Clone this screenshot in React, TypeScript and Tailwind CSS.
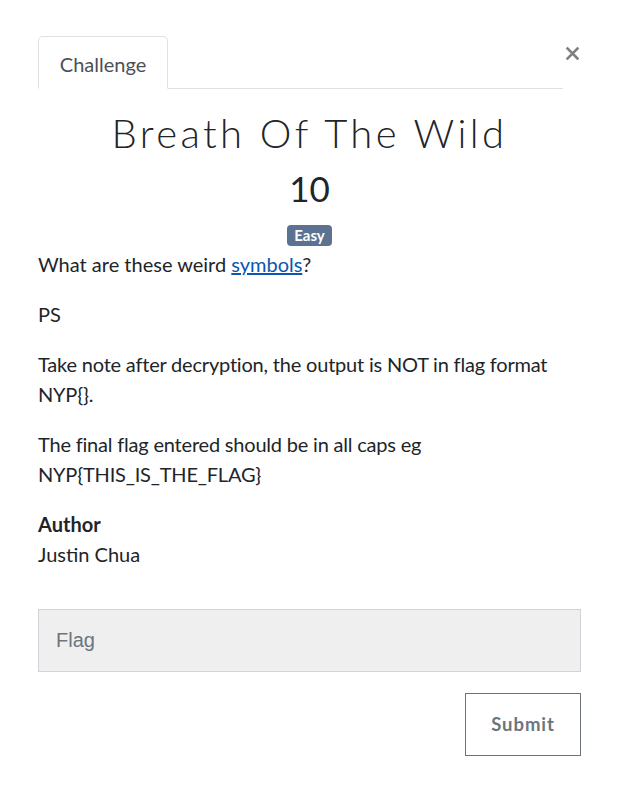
export default function App() {
  return (
    <div className="w-[620px] h-[810px] bg-white pl-[38px] pr-[39px] pt-[36px] font-['Lato','Liberation_Sans',sans-serif] text-[#212529]">
      <div className="flex items-start">
        <div className="flex flex-1 border-b border-[#dee2e6]">
          <div className="-mb-px flex h-[53px] w-[130px] items-center justify-center rounded-t-[5px] border border-[#dee2e6] border-b-white bg-white pt-[3px] text-[20px] text-[#495057]">
            Challenge
          </div>
        </div>
        <button
          type="button"
          className="flex h-[33px] w-[18px] items-center justify-start pt-[2px] pl-[3px]"
        >
          <svg width="13" height="13" viewBox="0 0 13 13">
            <path
              d="M1.5 1.5 L11.5 11.5 M11.5 1.5 L1.5 11.5"
              stroke="#808080"
              strokeWidth="2.6"
              strokeLinecap="square"
            />
          </svg>
        </button>
      </div>

      <h2 className="mt-[20px] text-center text-[40px] font-light leading-[48px] tracking-[0.085em]">
        Breath Of The Wild
      </h2>
      <h3 className="mt-[10px] text-center text-[35px] leading-[42px]">10</h3>
      <div className="mt-[16px] flex justify-center">
        <span className="rounded-[4px] bg-[#5b7290] px-[7px] text-[15px] font-bold leading-[21px] text-white">
          Easy
        </span>
      </div>

      <div className="mt-[3px] text-[20px] leading-[30px]">
        <p className="mb-[20px]">
          What are these weird{" "}
          <a href="#" className="text-[#0a56b0] underline">
            symbols
          </a>
          ?
        </p>
        <p className="mb-[20px]">PS</p>
        <p className="mb-[20px] pr-[20px] tracking-[-0.01em]">
          Take note after decryption, the output is NOT in flag format NYP{"{}"}.
        </p>
        <p className="mb-[20px] tracking-[-0.01em]">
          The final flag entered should be in all caps eg
          <br />
          NYP{"{THIS_IS_THE_FLAG}"}
        </p>
        <p className="font-bold">Author</p>
        <p>Justin Chua</p>
      </div>

      <input
        type="text"
        placeholder="Flag"
        className="mt-[40px] block h-[63px] w-full border border-[#ced4da] bg-[#efefef] px-[17px] font-['Liberation_Sans',sans-serif] text-[20px] text-[#495057] outline-none placeholder:text-[#6c757d]"
      />
      <div className="mt-[21px] flex justify-end">
        <button
          type="button"
          className="h-[63px] w-[116px] border border-[#6c757d] bg-white text-[18.5px] font-bold tracking-[0.05em] text-[#6c757d]"
        >
          Submit
        </button>
      </div>
    </div>
  );
}
